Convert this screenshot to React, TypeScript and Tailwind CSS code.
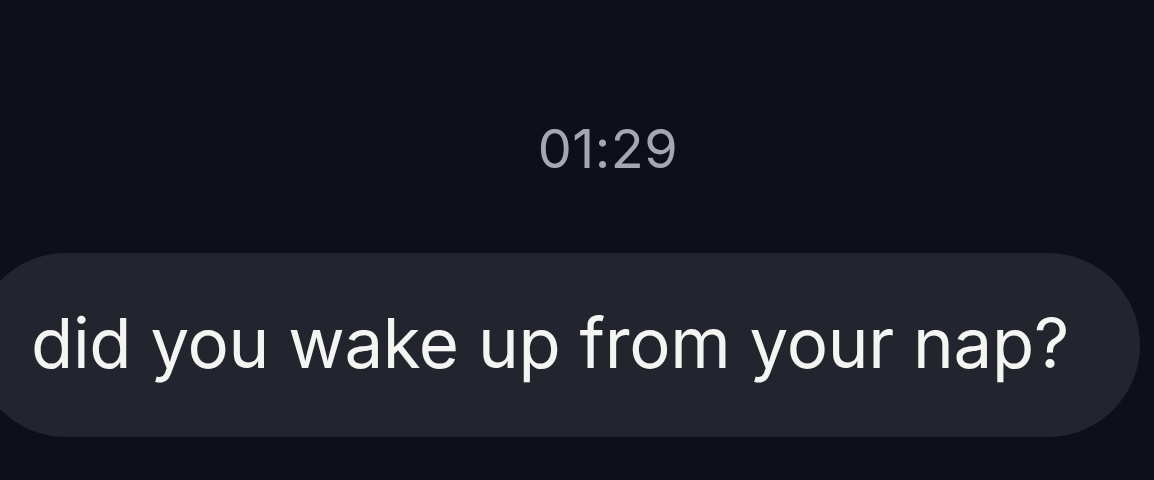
export default function App() {
  return (
    <div
      className="w-[1154px] h-[480px] overflow-hidden bg-[#0d1019] flex flex-col"
      style={{ fontFamily: "Inter, 'Noto Sans', sans-serif" }}
    >
      {/* Timestamp */}
      <div className="pt-[117px] h-[253px] pl-[62px] text-center">
        <span className="text-[54px] leading-[64px] text-[#a3a7b0] tracking-[0.5px]">01:29</span>
      </div>

      {/* Incoming bubble */}
      <div className="flex">
        <div className="ml-[-26px] w-[1166px] h-[184px] rounded-full bg-[#22252e] flex items-center pl-[57px]">
          <span className="text-[69px] leading-none text-[#f4f5f2] tracking-[-0.3px] pb-[4px]">
            did you wake up from your nap?
          </span>
        </div>
      </div>
    </div>
  );
}
